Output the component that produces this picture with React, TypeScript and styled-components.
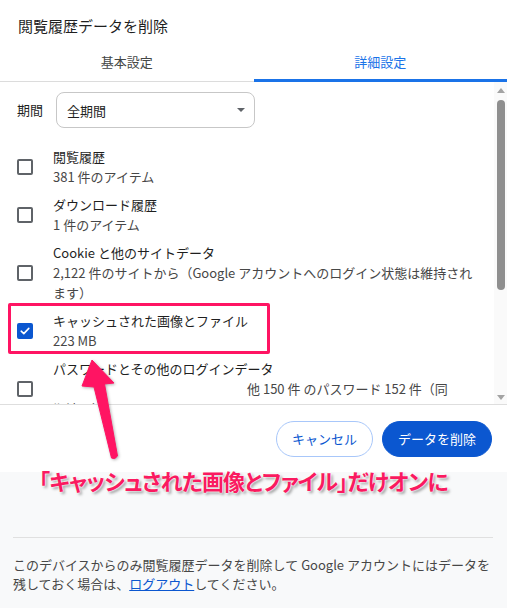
import React from "react";
import styled, { createGlobalStyle } from "styled-components";

const GlobalStyle = createGlobalStyle`
  html, body { margin: 0; padding: 0; background: #f8f9fa; }
  body { font-family: "Noto Sans CJK JP", "Noto Sans", sans-serif; color: #1f1f1f; }
  * { box-sizing: border-box; }
`;

const Page = styled.div`
  position: relative;
  width: 507px;
  height: 608px;
  overflow: hidden;
  background: #f8f9fa;
`;

const Dialog = styled.div`
  background: #ffffff;
  height: 472px;
  display: flex;
  flex-direction: column;
`;

const Title = styled.div`
  padding: 16px 0 0 18px;
  height: 36px;
  font-size: 15px;
  line-height: 20px;
  color: #1f1f1f;
`;

const TabBar = styled.div`
  display: flex;
  box-shadow: inset 0 -1px 0 #dcdcdc;
`;

const Tab = styled.div<{ $active?: boolean }>`
  flex: 1;
  height: 46px;
  padding-top: 16px;
  text-align: center;
  font-size: 13px;
  line-height: 20px;
  color: ${(p) => (p.$active ? "#1a73e8" : "#444746")};
  border-bottom: 3px solid ${(p) => (p.$active ? "#1a73e8" : "transparent")};
`;

const ScrollArea = styled.div`
  display: flex;
  height: 322px;
  overflow: hidden;
`;

const ScrollContent = styled.div`
  flex: 1;
  padding: 10px 0 0 17px;
`;

const PeriodRow = styled.div`
  display: flex;
  align-items: center;
  gap: 13px;
`;

const PeriodLabel = styled.span`
  font-size: 13px;
  line-height: 20px;
  color: #1f1f1f;
`;

const Select = styled.div`
  width: 199px;
  height: 36px;
  border: 1px solid #c7c7c7;
  border-radius: 8px;
  display: flex;
  align-items: center;
  justify-content: space-between;
  padding: 0 9px 0 10px;
  font-size: 13px;
  color: #1f1f1f;
`;

const Caret = styled.span`
  width: 0;
  height: 0;
  border-left: 4px solid transparent;
  border-right: 4px solid transparent;
  border-top: 4px solid #5f6368;
`;

const OptionList = styled.div`
  display: flex;
  flex-direction: column;
  gap: 8px;
  margin-top: 19px;
`;

const OptionRow = styled.div`
  display: flex;
  align-items: center;
  gap: 20px;
`;

const Checkbox = styled.span<{ $checked?: boolean }>`
  flex: none;
  width: 16px;
  height: 16px;
  border-radius: 2px;
  border: 2px solid ${(p) => (p.$checked ? "#0b57d0" : "#5f6368")};
  background: ${(p) => (p.$checked ? "#0b57d0" : "transparent")};
  display: flex;
  align-items: center;
  justify-content: center;
`;

const OptionText = styled.div`
  display: flex;
  flex-direction: column;
`;

const OptionTitle = styled.span`
  font-size: 13px;
  line-height: 20px;
  color: #1f1f1f;
  white-space: nowrap;
`;

const OptionSub = styled.span<{ $indent?: number }>`
  font-size: 13px;
  line-height: 20px;
  color: #474747;
  white-space: nowrap;
  padding-left: ${(p) => p.$indent ?? 0}px;
`;

const Scrollbar = styled.div`
  width: 13px;
  flex: none;
  background: #fafafa;
  display: flex;
  flex-direction: column;
  align-items: center;
  padding-top: 6px;
`;

const ScrollArrow = styled.span<{ $down?: boolean }>`
  width: 0;
  height: 0;
  border-left: 4px solid transparent;
  border-right: 4px solid transparent;
  ${(p) =>
    p.$down
      ? "border-top: 5px solid #a3a3a3; margin-top: auto; margin-bottom: 4px;"
      : "border-bottom: 5px solid #a3a3a3;"}
`;

const ScrollThumb = styled.span`
  width: 8px;
  height: 190px;
  margin-top: 7px;
  border-radius: 4px;
  background: #8f8f8f;
`;

const ButtonBar = styled.div`
  border-top: 1px solid #dedede;
  flex: 1;
  display: flex;
  justify-content: flex-end;
  align-items: flex-start;
  gap: 9px;
  padding: 16px 15px 0 0;
`;

const Button = styled.button<{ $primary?: boolean }>`
  height: 36px;
  border-radius: 18px;
  padding: 0 15px;
  font-family: inherit;
  font-size: 13px;
  line-height: 20px;
  cursor: pointer;
  border: 1px solid ${(p) => (p.$primary ? "#0b57d0" : "#a8c7fa")};
  background: ${(p) => (p.$primary ? "#0b57d0" : "#ffffff")};
  color: ${(p) => (p.$primary ? "#ffffff" : "#0b57d0")};
`;

const Footer = styled.div`
  padding: 65px 14px 0 13px;
`;

const FooterRule = styled.div`
  height: 1px;
  background: #e0e0e0;
`;

const FooterText = styled.p`
  margin: 17px 0 0;
  font-size: 13px;
  line-height: 19px;
  color: #474747;
`;

const Link = styled.a`
  color: #0b57d0;
  text-decoration: underline;
`;

const Highlight = styled.div`
  position: absolute;
  left: 8px;
  top: 303px;
  width: 262px;
  height: 51px;
  border: 3px solid #ff1463;
  border-radius: 2px;
  pointer-events: none;
`;

const ArrowSvg = styled.svg`
  position: absolute;
  left: 76px;
  top: 355px;
  width: 48px;
  height: 110px;
  overflow: visible;
  filter: drop-shadow(1px 1px 1.5px rgba(0, 0, 0, 0.3));
`;

const Callout = styled.div`
  position: absolute;
  left: 39px;
  top: 466px;
  font-size: 22px;
  line-height: 28px;
  font-weight: 700;
  letter-spacing: -0.8px;
  font-feature-settings: "palt";
  color: #fa1a60;
  white-space: nowrap;
  text-shadow: 0 0 2px #fff, 0 0 2px #fff, 2px 2px 3px rgba(0, 0, 0, 0.4);
`;

const Check = () => (
  <svg width="12" height="12" viewBox="0 0 12 12">
    <path d="M2.2 6.2 L4.8 8.6 L9.8 3.4" fill="none" stroke="#fff" strokeWidth="1.6" strokeLinecap="round" strokeLinejoin="round" />
  </svg>
);

export default function App() {
  return (
    <>
      <GlobalStyle />
      <Page>
        <Dialog>
          <Title>閲覧履歴データを削除</Title>
          <TabBar>
            <Tab>基本設定</Tab>
            <Tab $active>詳細設定</Tab>
          </TabBar>
          <ScrollArea>
            <ScrollContent>
              <PeriodRow>
                <PeriodLabel>期間</PeriodLabel>
                <Select>
                  <span>全期間</span>
                  <Caret />
                </Select>
              </PeriodRow>
              <OptionList>
                <OptionRow>
                  <Checkbox />
                  <OptionText>
                    <OptionTitle>閲覧履歴</OptionTitle>
                    <OptionSub>381 件のアイテム</OptionSub>
                  </OptionText>
                </OptionRow>
                <OptionRow>
                  <Checkbox />
                  <OptionText>
                    <OptionTitle>ダウンロード履歴</OptionTitle>
                    <OptionSub>1 件のアイテム</OptionSub>
                  </OptionText>
                </OptionRow>
                <OptionRow>
                  <Checkbox />
                  <OptionText>
                    <OptionTitle>Cookie と他のサイトデータ</OptionTitle>
                    <OptionSub>2,122 件のサイトから（Google アカウントへのログイン状態は維持され</OptionSub>
                    <OptionSub>ます）</OptionSub>
                  </OptionText>
                </OptionRow>
                <OptionRow>
                  <Checkbox $checked>
                    <Check />
                  </Checkbox>
                  <OptionText>
                    <OptionTitle>キャッシュされた画像とファイル</OptionTitle>
                    <OptionSub>223 MB</OptionSub>
                  </OptionText>
                </OptionRow>
                <OptionRow>
                  <Checkbox />
                  <OptionText>
                    <OptionTitle>パスワードとその他のログインデータ</OptionTitle>
                    <OptionSub $indent={194}>他 150 件 のパスワード 152 件（同</OptionSub>
                    <OptionSub>期済み）</OptionSub>
                  </OptionText>
                </OptionRow>
              </OptionList>
            </ScrollContent>
            <Scrollbar>
              <ScrollArrow />
              <ScrollThumb />
              <ScrollArrow $down />
            </Scrollbar>
          </ScrollArea>
          <ButtonBar>
            <Button>キャンセル</Button>
            <Button $primary>データを削除</Button>
          </ButtonBar>
        </Dialog>
        <Footer>
          <FooterRule />
          <FooterText>
            このデバイスからのみ閲覧履歴データを削除して Google アカウントにはデータを残しておく場合は、
            <Link href="#">ログアウト</Link>してください。
          </FooterText>
        </Footer>

        <Highlight />
        <ArrowSvg viewBox="76 355 48 110">
          <path
            d="M92 360 L114 383 L104.5 384 L117.5 456 Q115 460 111.5 458 L94 387 L82 386 Z"
            fill="#ff1463"
            stroke="#ff1463"
            strokeWidth="1"
            strokeLinejoin="round"
          />
        </ArrowSvg>
        <Callout>「キャッシュされた画像とファイル」だけオンに</Callout>
      </Page>
    </>
  );
}
